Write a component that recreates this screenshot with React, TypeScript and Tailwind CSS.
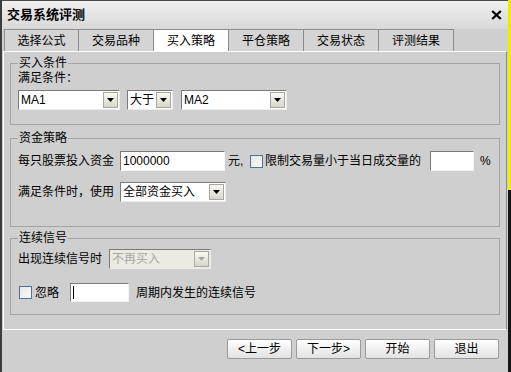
import React from 'react';

const FONT = "font-['Liberation_Sans','Noto_Sans_CJK_SC',sans-serif]";

function Arrow({ disabled = false }: { disabled?: boolean }) {
  return (
    <span className="flex h-[16px] w-[15px] shrink-0 items-center justify-center border border-[#a8a8a0] bg-gradient-to-b from-[#fafaf4] to-[#d6d6ca]">
      <svg width="7" height="4" viewBox="0 0 7 4">
        <path d="M0 0H7L3.5 4Z" fill={disabled ? '#a8a8a8' : '#000'} />
      </svg>
    </span>
  );
}

function Combo({ value, className = '', disabled = false }: { value: string; className?: string; disabled?: boolean }) {
  return (
    <div
      className={`flex h-[20px] shrink-0 items-center justify-between border border-t-[#7a7a7a] border-l-[#7a7a7a] border-r-[#ececec] border-b-[#ececec] pl-[2px] pr-[1px] ${
        disabled ? 'bg-[#ebebe4] text-[#a8a8a0]' : 'bg-white text-black'
      } ${className}`}
    >
      <span className="leading-[16px]">{value}</span>
      <Arrow disabled={disabled} />
    </div>
  );
}

function TextBox({ value = '', className = '', caret = false }: { value?: string; className?: string; caret?: boolean }) {
  return (
    <div
      className={`flex shrink-0 items-center border border-t-[#7a7a7a] border-l-[#7a7a7a] border-r-[#f4f4f4] border-b-[#f4f4f4] bg-white px-[2px] leading-[16px] ${className}`}
    >
      {caret && <span className="h-[13px] w-[1px] bg-black" />}
      {value}
    </div>
  );
}

function Check({ className = '' }: { className?: string }) {
  return <span className={`h-[13px] w-[13px] shrink-0 border border-[#52709c] bg-gradient-to-br from-[#e6e6e6] to-[#fafafa] ${className}`} />;
}

const tabs = ['选择公式', '交易品种', '买入策略', '平仓策略', '交易状态', '评测结果'];
const buttons = ['<上一步', '下一步>', '开始', '退出'];

export default function App() {
  return (
    <div className={`flex h-[372px] w-[511px] overflow-hidden bg-[#cfcfcf] text-[12px] text-black ${FONT}`}>
      <div className="w-[2px] shrink-0 bg-[#3c3c3c]" />

      <div className="flex w-[506px] shrink-0 flex-col">
        {/* title bar */}
        <div className="flex h-[29px] shrink-0 items-center justify-between border-t border-[#4a4a4a] bg-gradient-to-b from-[#f0f0f0] to-[#d8d8d8] pl-[5px] pr-[6px]">
          <span className="text-[13px] font-bold leading-[16px]">交易系统评测</span>
          <svg width="11" height="10" viewBox="0 0 11 10">
            <path d="M1.2 1L9.8 9M9.8 1L1.2 9" stroke="#000" strokeWidth="2.3" />
          </svg>
        </div>

        {/* tabs */}
        <div className="flex h-[22px] shrink-0 pl-[2px]">
          {tabs.map((t, i) => (
            <div
              key={t}
              className={`flex w-[75px] items-center justify-center border-t border-r border-[#8c8c8c] ${i === 0 ? 'border-l' : ''} ${
                i === 2 ? 'bg-white' : 'bg-[#d4d4d4]'
              }`}
            >
              {t}
            </div>
          ))}
        </div>

        {/* page */}
        <div className="mx-[1px] flex h-[279px] shrink-0 flex-col border border-t-white border-l-white border-r-[#8c8c8c] border-b-white px-[6px] pt-[4px]">
          <fieldset className="border border-[#a4a4a4] px-[7px] pb-[14px]">
            <legend className="px-[1px] leading-[14px]">买入条件</legend>
            <div className="mt-[1px] leading-[14px]">满足条件：</div>
            <div className="mt-[5px] flex">
              <Combo value="MA1" className="w-[102px]" />
              <Combo value="大于" className="ml-[7px] w-[46px]" />
              <Combo value="MA2" className="ml-[8px] w-[106px]" />
            </div>
          </fieldset>

          <fieldset className="mt-[6px] border border-[#a4a4a4] px-[7px] pb-[24px]">
            <legend className="px-[1px] leading-[14px]">资金策略</legend>
            <div className="mt-[6px] flex h-[20px] items-center">
              <span className="w-[102px] shrink-0">每只股票投入资金</span>
              <TextBox value="1000000" className="h-[20px] w-[105px]" />
              <span className="ml-[3px] w-[22px] shrink-0">元,</span>
              <Check />
              <span className="ml-[2px] w-[165px] shrink-0">限制交易量小于当日成交量的</span>
              <TextBox className="h-[20px] w-[44px]" />
              <span className="ml-[6px]">%</span>
            </div>
            <div className="mt-[11px] flex h-[20px] items-center">
              <span className="w-[102px] shrink-0">满足条件时，使用</span>
              <Combo value="全部资金买入" className="w-[106px]" />
            </div>
          </fieldset>

          <fieldset className="mt-[4px] border border-[#a4a4a4] px-[7px] pb-[12px]">
            <legend className="px-[1px] leading-[14px]">连续信号</legend>
            <div className="mt-[4px] flex h-[20px] items-center">
              <span className="w-[91px] shrink-0">出现连续信号时</span>
              <Combo value="不再买入" disabled className="w-[102px]" />
            </div>
            <div className="mt-[14px] flex h-[19px] items-center">
              <Check className="ml-[1px]" />
              <span className="ml-[3px] w-[35px] shrink-0">忽略</span>
              <TextBox caret className="h-[19px] w-[59px]" />
              <span className="ml-[7px]">周期内发生的连续信号</span>
            </div>
          </fieldset>
        </div>

        {/* buttons */}
        <div className="mt-[9px] flex justify-end gap-[4px] pr-[9px]">
          {buttons.map((b) => (
            <div
              key={b}
              className="flex h-[20px] w-[65px] items-center justify-center rounded-[2px] border border-[#9a9a9a] bg-gradient-to-b from-white to-[#e2e2e2]"
            >
              {b}
            </div>
          ))}
        </div>
      </div>

      <div className="flex w-[3px] shrink-0 flex-col">
        <div className="h-[190px] bg-[#f2ea00]" />
        <div className="flex-1 bg-[#151515]" />
      </div>
    </div>
  );
}
